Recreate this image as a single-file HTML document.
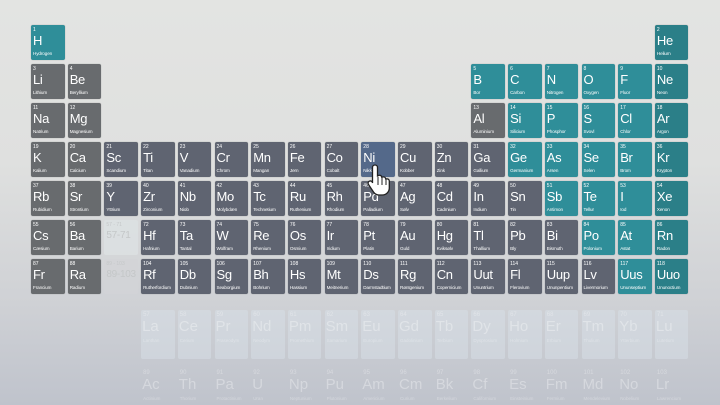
<!DOCTYPE html>
<html style="background:#bfc3cc"><head><meta charset="utf-8"><style>
*{margin:0;padding:0;box-sizing:border-box}
html,body{width:720px;height:405px;overflow:hidden}
body{position:relative;font-family:"Liberation Sans",sans-serif;background:linear-gradient(#e3e4e2 0%,#dfe0df 40%,#cfd1d5 75%,#bfc3cc 100%)}
.e{position:absolute;width:33.5px;height:35px;border-radius:2px;background:#5f6471;color:#fff;box-shadow:0 0 1px rgba(0,0,0,.3)}
.e i{position:absolute;left:2px;top:2px;font-style:normal;font-size:5px;white-space:nowrap}
.e b{position:absolute;left:2px;top:8px;font-weight:normal;font-size:13px;letter-spacing:-.3px;white-space:nowrap}
.e u{position:absolute;left:2px;bottom:4px;text-decoration:none;font-size:4.6px;white-space:nowrap;letter-spacing:-.1px}
.g{background:#686b6e}.t{background:#2f8e99}.d{background:#2b7f88}.n{background:#54698a}
.p{background:rgba(220,224,226,.85);box-shadow:none;color:#c4c7c8}
.c1{left:31px}.c2{left:67.7px}.c3{left:104.4px}.c4{left:141.1px}.c5{left:177.8px}.c6{left:214.5px}.c7{left:251.2px}.c8{left:287.9px}.c9{left:324.6px}.c10{left:361.3px}.c11{left:398px}.c12{left:434.7px}.c13{left:471.4px}.c14{left:508.1px}.c15{left:544.8px}.c16{left:581.5px}.c17{left:618.2px}.c18{left:654.9px}
.r1{top:25px}.r2{top:64px}.r3{top:103px}.r4{top:142px}.r5{top:181px}.r6{top:220px}.r7{top:259px}
.f{position:absolute;width:33.5px;height:49px;color:rgba(255,255,255,.32)}
.f.bx{background:rgba(215,224,232,.5);border-radius:2px;top:310px}
.f.nb{top:368px}
.f i{position:absolute;left:2px;top:2px;font-style:normal;font-size:6px}
.f b{position:absolute;left:1px;top:8px;font-weight:normal;font-size:15px}
.f u{position:absolute;left:2px;top:28px;text-decoration:none;font-size:4.5px;white-space:nowrap}
</style></head><body>
<div class="e t c1 r1"><i>1</i><b>H</b><u>Hydrogen</u></div>
<div class="e d c18 r1"><i>2</i><b>He</b><u>Helium</u></div>

<div class="e g c1 r2"><i>3</i><b>Li</b><u>Lithium</u></div>
<div class="e g c2 r2"><i>4</i><b>Be</b><u>Beryllium</u></div>
<div class="e t c13 r2"><i>5</i><b>B</b><u>Bor</u></div>
<div class="e t c14 r2"><i>6</i><b>C</b><u>Carbon</u></div>
<div class="e t c15 r2"><i>7</i><b>N</b><u>Nitrogen</u></div>
<div class="e t c16 r2"><i>8</i><b>O</b><u>Oxygen</u></div>
<div class="e t c17 r2"><i>9</i><b>F</b><u>Fluor</u></div>
<div class="e d c18 r2"><i>10</i><b>Ne</b><u>Neon</u></div>

<div class="e g c1 r3"><i>11</i><b>Na</b><u>Natrium</u></div>
<div class="e g c2 r3"><i>12</i><b>Mg</b><u>Magnesium</u></div>
<div class="e g c13 r3"><i>13</i><b>Al</b><u>Aluminium</u></div>
<div class="e t c14 r3"><i>14</i><b>Si</b><u>Silicium</u></div>
<div class="e t c15 r3"><i>15</i><b>P</b><u>Phosphor</u></div>
<div class="e t c16 r3"><i>16</i><b>S</b><u>Svovl</u></div>
<div class="e t c17 r3"><i>17</i><b>Cl</b><u>Chlor</u></div>
<div class="e d c18 r3"><i>18</i><b>Ar</b><u>Argon</u></div>

<div class="e g c1 r4"><i>19</i><b>K</b><u>Kalium</u></div>
<div class="e g c2 r4"><i>20</i><b>Ca</b><u>Calcium</u></div>
<div class="e c3 r4"><i>21</i><b>Sc</b><u>Scandium</u></div>
<div class="e c4 r4"><i>22</i><b>Ti</b><u>Titan</u></div>
<div class="e c5 r4"><i>23</i><b>V</b><u>Vanadium</u></div>
<div class="e c6 r4"><i>24</i><b>Cr</b><u>Chrom</u></div>
<div class="e c7 r4"><i>25</i><b>Mn</b><u>Mangan</u></div>
<div class="e c8 r4"><i>26</i><b>Fe</b><u>Jern</u></div>
<div class="e c9 r4"><i>27</i><b>Co</b><u>Cobalt</u></div>
<div class="e n c10 r4"><i>28</i><b>Ni</b><u>Nikkel</u></div>
<div class="e c11 r4"><i>29</i><b>Cu</b><u>Kobber</u></div>
<div class="e c12 r4"><i>30</i><b>Zn</b><u>Zink</u></div>
<div class="e c13 r4"><i>31</i><b>Ga</b><u>Gallium</u></div>
<div class="e t c14 r4"><i>32</i><b>Ge</b><u>Germanium</u></div>
<div class="e t c15 r4"><i>33</i><b>As</b><u>Arsen</u></div>
<div class="e t c16 r4"><i>34</i><b>Se</b><u>Selen</u></div>
<div class="e t c17 r4"><i>35</i><b>Br</b><u>Brom</u></div>
<div class="e d c18 r4"><i>36</i><b>Kr</b><u>Krypton</u></div>

<div class="e g c1 r5"><i>37</i><b>Rb</b><u>Rubidium</u></div>
<div class="e g c2 r5"><i>38</i><b>Sr</b><u>Strontium</u></div>
<div class="e c3 r5"><i>39</i><b>Y</b><u>Yttrium</u></div>
<div class="e c4 r5"><i>40</i><b>Zr</b><u>Zirconium</u></div>
<div class="e c5 r5"><i>41</i><b>Nb</b><u>Niob</u></div>
<div class="e c6 r5"><i>42</i><b>Mo</b><u>Molybdæn</u></div>
<div class="e c7 r5"><i>43</i><b>Tc</b><u>Technetium</u></div>
<div class="e c8 r5"><i>44</i><b>Ru</b><u>Ruthenium</u></div>
<div class="e c9 r5"><i>45</i><b>Rh</b><u>Rhodium</u></div>
<div class="e c10 r5"><i>46</i><b>Pd</b><u>Palladium</u></div>
<div class="e c11 r5"><i>47</i><b>Ag</b><u>Sølv</u></div>
<div class="e c12 r5"><i>48</i><b>Cd</b><u>Cadmium</u></div>
<div class="e c13 r5"><i>49</i><b>In</b><u>Indium</u></div>
<div class="e c14 r5"><i>50</i><b>Sn</b><u>Tin</u></div>
<div class="e t c15 r5"><i>51</i><b>Sb</b><u>Antimon</u></div>
<div class="e t c16 r5"><i>52</i><b>Te</b><u>Tellur</u></div>
<div class="e t c17 r5"><i>53</i><b>I</b><u>Iod</u></div>
<div class="e d c18 r5"><i>54</i><b>Xe</b><u>Xenon</u></div>

<div class="e g c1 r6"><i>55</i><b>Cs</b><u>Cæsium</u></div>
<div class="e g c2 r6"><i>56</i><b>Ba</b><u>Barium</u></div>
<div class="e p c3 r6"><i>57 - 71</i><b style="font-size:10px;top:10px">57-71</b></div>
<div class="e c4 r6"><i>72</i><b>Hf</b><u>Hafnium</u></div>
<div class="e c5 r6"><i>73</i><b>Ta</b><u>Tantal</u></div>
<div class="e c6 r6"><i>74</i><b>W</b><u>Wolfram</u></div>
<div class="e c7 r6"><i>75</i><b>Re</b><u>Rhenium</u></div>
<div class="e c8 r6"><i>76</i><b>Os</b><u>Osmium</u></div>
<div class="e c9 r6"><i>77</i><b>Ir</b><u>Iridium</u></div>
<div class="e c10 r6"><i>78</i><b>Pt</b><u>Platin</u></div>
<div class="e c11 r6"><i>79</i><b>Au</b><u>Guld</u></div>
<div class="e c12 r6"><i>80</i><b>Hg</b><u>Kviksølv</u></div>
<div class="e c13 r6"><i>81</i><b>Tl</b><u>Thallium</u></div>
<div class="e c14 r6"><i>82</i><b>Pb</b><u>Bly</u></div>
<div class="e c15 r6"><i>83</i><b>Bi</b><u>Bismuth</u></div>
<div class="e t c16 r6"><i>84</i><b>Po</b><u>Polonium</u></div>
<div class="e t c17 r6"><i>85</i><b>At</b><u>Astat</u></div>
<div class="e d c18 r6"><i>86</i><b>Rn</b><u>Radon</u></div>

<div class="e g c1 r7"><i>87</i><b>Fr</b><u>Francium</u></div>
<div class="e g c2 r7"><i>88</i><b>Ra</b><u>Radium</u></div>
<div class="e p c3 r7" style="background:rgba(210,212,215,.85)"><i>89 - 103</i><b style="font-size:10px;top:10px">89-103</b></div>
<div class="e c4 r7"><i>104</i><b>Rf</b><u>Rutherfordium</u></div>
<div class="e c5 r7"><i>105</i><b>Db</b><u>Dubnium</u></div>
<div class="e c6 r7"><i>106</i><b>Sg</b><u>Seaborgium</u></div>
<div class="e c7 r7"><i>107</i><b>Bh</b><u>Bohrium</u></div>
<div class="e c8 r7"><i>108</i><b>Hs</b><u>Hassium</u></div>
<div class="e c9 r7"><i>109</i><b>Mt</b><u>Meitnerium</u></div>
<div class="e c10 r7"><i>110</i><b>Ds</b><u>Darmstadtium</u></div>
<div class="e c11 r7"><i>111</i><b>Rg</b><u>Røntgenium</u></div>
<div class="e c12 r7"><i>112</i><b>Cn</b><u>Copernicium</u></div>
<div class="e c13 r7"><i>113</i><b>Uut</b><u>Ununtrium</u></div>
<div class="e c14 r7"><i>114</i><b>Fl</b><u>Flerovium</u></div>
<div class="e c15 r7"><i>115</i><b>Uup</b><u>Ununpentium</u></div>
<div class="e c16 r7"><i>116</i><b>Lv</b><u>Livermorium</u></div>
<div class="e t c17 r7"><i>117</i><b>Uus</b><u>Ununseptium</u></div>
<div class="e d c18 r7"><i>118</i><b>Uuo</b><u>Ununoctium</u></div>

<div class="f bx c4"><i>57</i><b>La</b><u>Lanthan</u></div>
<div class="f bx c5"><i>58</i><b>Ce</b><u>Cerium</u></div>
<div class="f bx c6"><i>59</i><b>Pr</b><u>Praseodym</u></div>
<div class="f bx c7"><i>60</i><b>Nd</b><u>Neodym</u></div>
<div class="f bx c8"><i>61</i><b>Pm</b><u>Promethium</u></div>
<div class="f bx c9"><i>62</i><b>Sm</b><u>Samarium</u></div>
<div class="f bx c10"><i>63</i><b>Eu</b><u>Europium</u></div>
<div class="f bx c11"><i>64</i><b>Gd</b><u>Gadolinium</u></div>
<div class="f bx c12"><i>65</i><b>Tb</b><u>Terbium</u></div>
<div class="f bx c13"><i>66</i><b>Dy</b><u>Dysprosium</u></div>
<div class="f bx c14"><i>67</i><b>Ho</b><u>Holmium</u></div>
<div class="f bx c15"><i>68</i><b>Er</b><u>Erbium</u></div>
<div class="f bx c16"><i>69</i><b>Tm</b><u>Thulium</u></div>
<div class="f bx c17"><i>70</i><b>Yb</b><u>Ytterbium</u></div>
<div class="f bx c18"><i>71</i><b>Lu</b><u>Lutetium</u></div>

<div class="f nb c4"><i>89</i><b>Ac</b><u>Actinium</u></div>
<div class="f nb c5"><i>90</i><b>Th</b><u>Thorium</u></div>
<div class="f nb c6"><i>91</i><b>Pa</b><u>Protactinium</u></div>
<div class="f nb c7"><i>92</i><b>U</b><u>Uran</u></div>
<div class="f nb c8"><i>93</i><b>Np</b><u>Neptunium</u></div>
<div class="f nb c9"><i>94</i><b>Pu</b><u>Plutonium</u></div>
<div class="f nb c10"><i>95</i><b>Am</b><u>Americium</u></div>
<div class="f nb c11"><i>96</i><b>Cm</b><u>Curium</u></div>
<div class="f nb c12"><i>97</i><b>Bk</b><u>Berkelium</u></div>
<div class="f nb c13"><i>98</i><b>Cf</b><u>Californium</u></div>
<div class="f nb c14"><i>99</i><b>Es</b><u>Einsteinium</u></div>
<div class="f nb c15"><i>100</i><b>Fm</b><u>Fermium</u></div>
<div class="f nb c16"><i>101</i><b>Md</b><u>Mendelevium</u></div>
<div class="f nb c17"><i>102</i><b>No</b><u>Nobelium</u></div>
<div class="f nb c18"><i>103</i><b>Lr</b><u>Lawrencium</u></div>

<svg style="position:absolute;left:366px;top:163px" width="28" height="34" viewBox="0 0 28 34">
<path d="M9 2c1.5 0 2.5 1 2.5 2.5V13l1-.5c1.2-.6 2.6 0 3 1l.3.8 1-.3c1.3-.3 2.500.4 2.8 1.5l.2.6.9-.2c1.4-.2 2.6.8 2.6 2.2V25c0 3.5-2.8 7-7 7h-3.5c-2.5 0-4-1.2-5.300-3L2.5 21.5c-.8-1.200-.4-2.700.8-3.300 1-.5 2.200-.2 2.900.7L6.5 20V4.5C6.5 3 7.5 2 9 2z" fill="#fff" stroke="#222" stroke-width="1.3"/>
<path d="M12 14v8M16 15v7M20 16.5v5.5" stroke="#222" stroke-width="1"/>
</svg>
</body></html>
